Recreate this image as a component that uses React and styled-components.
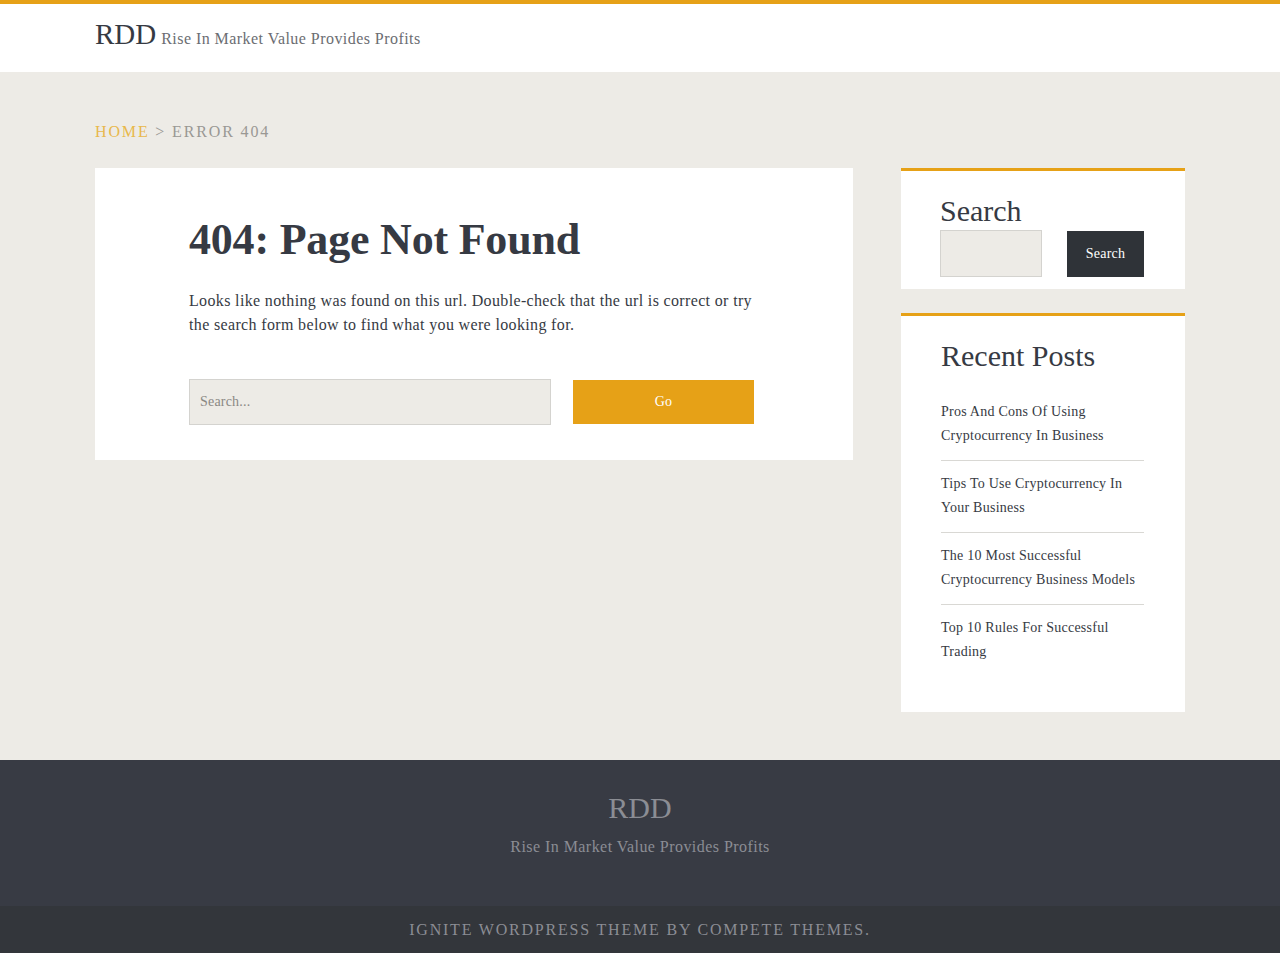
import React from "react";
import styled, { createGlobalStyle } from "styled-components";

const GOLD = "#e6a117";
const INK = "#363a43";

const Global = createGlobalStyle`
  * { box-sizing: border-box; }
  html, body { margin: 0; padding: 0; }
  body {
    background: #edebe6;
    font-family: "Liberation Serif", "DejaVu Serif", serif;
    color: ${INK};
  }
`;

const Page = styled.div`
  display: flex;
  flex-direction: column;
  min-height: 953px;
`;

const Header = styled.header`
  background: #fff;
  border-top: 4px solid ${GOLD};
  height: 72px;
  display: flex;
  align-items: center;
  padding: 0 95px;
`;

const Brand = styled.div`
  display: flex;
  align-items: baseline;
  gap: 5px;
  margin-top: -7px;
`;

const Logo = styled.span`
  font-size: 29px;
  color: ${INK};
`;

const Tagline = styled.span`
  font-size: 16px;
  letter-spacing: 0.45px;
  color: #6b6d72;
`;

const Main = styled.main`
  flex: 1;
  padding: 48px 95px 48px;
`;

const Crumbs = styled.nav`
  font-size: 16px;
  text-transform: uppercase;
  letter-spacing: 1.85px;
  color: #9a9894;
  margin: 2px 0 26px;
  line-height: 20px;
`;

const CrumbLink = styled.a`
  color: #e8b84c;
  text-decoration: none;
`;

const Columns = styled.div`
  display: grid;
  grid-template-columns: 758px 284px;
  gap: 48px;
  align-items: start;
`;

const Card = styled.article`
  background: #fff;
  padding: 44px 94px 35px;
`;

const Title = styled.h1`
  font-size: 44px;
  font-weight: 700;
  letter-spacing: -0.2px;
  margin: 0 0 21px;
  line-height: 56px;
  color: ${INK};
`;

const Text = styled.p`
  font-size: 16px;
  line-height: 24px;
  letter-spacing: 0.35px;
  margin: 0 0 42px;
  color: ${INK};
  max-width: 578px;
`;

const Form = styled.form`
  display: flex;
  align-items: center;
  gap: 22px;
`;

const Field = styled.input`
  background: #edebe6;
  border: 1px solid #d4d3cf;
  font-family: inherit;
  font-size: 14px;
  letter-spacing: 0.2px;
  color: #888;
  padding: 0 10px;
  outline: none;
  width: ${(p) => p.$w}px;
  height: ${(p) => p.$h}px;
  &::placeholder { color: #8a8884; }
`;

const Button = styled.button`
  border: 0;
  font-family: inherit;
  font-size: 14px;
  letter-spacing: 0.2px;
  color: #fff;
  background: ${(p) => (p.$dark ? "#2f3338" : GOLD)};
  width: ${(p) => p.$w}px;
  height: ${(p) => p.$h}px;
  cursor: pointer;
`;

const Sidebar = styled.aside`
  display: flex;
  flex-direction: column;
  gap: 24px;
`;

const Widget = styled.section`
  background: #fff;
  border-top: 3px solid ${GOLD};
  padding: ${(p) => p.$pad};
`;

const WidgetTitle = styled.h2`
  font-size: 30px;
  font-weight: 400;
  line-height: 36px;
  margin: 0;
  color: ${INK};
`;

const SideForm = styled.form`
  display: flex;
  align-items: center;
  gap: 25px;
  margin-top: 1px;
`;

const PostList = styled.ul`
  list-style: none;
  margin: 15px 0 0;
  padding: 0;
  width: 203px;
`;

const PostItem = styled.li`
  font-size: 14px;
  line-height: 24px;
  letter-spacing: 0.25px;
  padding: 11px 0 12px;
  border-bottom: 1px solid #d9d8d4;
  &:last-child { border-bottom: 0; }
`;

const PostLink = styled.a`
  color: ${INK};
  text-decoration: none;
`;

const Footer = styled.footer`
  background: #383b44;
  text-align: center;
  padding: 30px 0 50px;
`;

const FooterLogo = styled.div`
  font-size: 30px;
  line-height: 36px;
  color: #8b8d94;
`;

const FooterTag = styled.div`
  font-size: 16px;
  letter-spacing: 0.45px;
  margin-top: 12px;
  color: #8b8d94;
`;

const Credit = styled.div`
  background: #33363b;
  height: 48px;
  display: flex;
  align-items: center;
  justify-content: center;
  font-size: 16px;
  text-transform: uppercase;
  letter-spacing: 1.8px;
  color: #8b8d94;
`;

const posts = [
  "Pros And Cons Of Using Cryptocurrency In Business",
  "Tips To Use Cryptocurrency In Your Business",
  "The 10 Most Successful Cryptocurrency Business Models",
  "Top 10 Rules For Successful Trading",
];

export default function App() {
  return (
    <Page>
      <Global />
      <Header>
        <Brand>
          <Logo>RDD</Logo>
          <Tagline>Rise In Market Value Provides Profits</Tagline>
        </Brand>
      </Header>
      <Main>
        <Crumbs>
          <CrumbLink href="#">Home</CrumbLink> &gt; Error 404
        </Crumbs>
        <Columns>
          <Card>
            <Title>404: Page Not Found</Title>
            <Text>
              Looks like nothing was found on this url. Double-check that the
              url is correct or try the search form below to find what you
              were looking for.
            </Text>
            <Form onSubmit={(e) => e.preventDefault()}>
              <Field $w={362} $h={46} placeholder="Search..." />
              <Button $w={181} $h={44}>Go</Button>
            </Form>
          </Card>
          <Sidebar>
            <Widget $pad="22px 40px 12px 39px">
              <WidgetTitle>Search</WidgetTitle>
              <SideForm onSubmit={(e) => e.preventDefault()}>
                <Field $w={102} $h={47} />
                <Button $dark $w={77} $h={46}>Search</Button>
              </SideForm>
            </Widget>
            <Widget $pad="22px 40px 36px">
              <WidgetTitle>Recent Posts</WidgetTitle>
              <PostList>
                {posts.map((p) => (
                  <PostItem key={p}>
                    <PostLink href="#">{p}</PostLink>
                  </PostItem>
                ))}
              </PostList>
            </Widget>
          </Sidebar>
        </Columns>
      </Main>
      <Footer>
        <FooterLogo>RDD</FooterLogo>
        <FooterTag>Rise In Market Value Provides Profits</FooterTag>
      </Footer>
      <Credit>Ignite WordPress Theme by Compete Themes.</Credit>
    </Page>
  );
}
